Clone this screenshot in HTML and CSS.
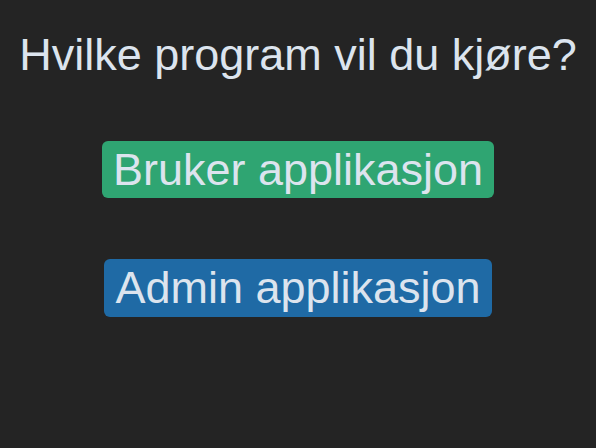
FILE: index.html
```html
<!DOCTYPE html>
<html>
<head>
<meta charset="utf-8">
<link rel="stylesheet" href="styles.css">
</head>
<body>
<main class="app">
  <h1 class="title">Hvilke program vil du kjøre?</h1>
  <button class="btn btn-user">Bruker applikasjon</button>
  <button class="btn btn-admin">Admin applikasjon</button>
</main>
</body>
</html>
```
FILE: styles.css
```css
html, body {
  margin: 0;
  padding: 0;
  background: #242424;
  height: 100%;
}
.app {
  display: flex;
  flex-direction: column;
  align-items: center;
  font-family: "Liberation Sans", Arial, sans-serif;
  color: #dce4ee;
}
.title {
  margin: 29px 0 0;
  font-size: 45px;
  font-weight: normal;
  line-height: 52px;
}
.btn {
  font-family: inherit;
  font-size: 45px;
  color: #dce4ee;
  border: none;
  border-radius: 6px;
  padding: 4px 11px 3px;
  line-height: 50px;
}
.btn-user {
  margin-top: 60px;
  background: #2fa572;
}
.btn-admin {
  margin-top: 61px;
  padding-bottom: 4px;
  background: #1f6aa5;
}
```
